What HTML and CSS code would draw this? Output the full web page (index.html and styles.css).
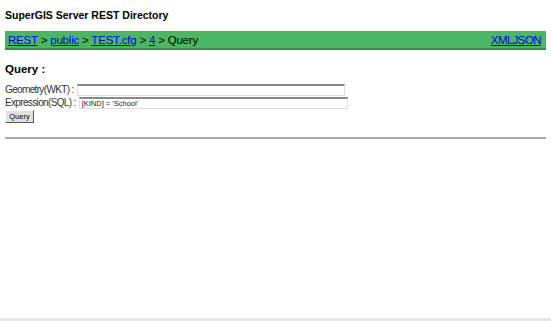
FILE: index.html
```html
<!DOCTYPE html>
<html lang="en">

<head>
    <meta charset="UTF-8">
    <link rel="stylesheet" href="styles.css">
    <title>SuperGIS Server REST Directory</title>
</head>

<body>
    <div class="page">
        <h1 class="title">SuperGIS Server REST Directory</h1>

        <!-- breadcrumb bar -->
        <div class="navbar">
            <div class="crumbs">
                <a href="#">REST</a> &gt; <a href="#">public</a> &gt; <a href="#">TEST.cfg</a> &gt; <a href="#">4</a> &gt; Query
            </div>
            <div class="formats">
                <a href="#">XML</a><a href="#">JSON</a>
            </div>
        </div>

        <h2 class="section">Query :</h2>

        <form class="query-form">
            <div class="row">
                <label for="geometry">Geometry(WKT) :</label>
                <input type="text" id="geometry" class="geo-input">
            </div>
            <div class="row">
                <label for="where">Expression(SQL) :</label>
                <input type="text" id="where" class="sql-input" value="[KIND] = 'School'">
            </div>
            <button type="button" class="btn">Query</button>
        </form>

        <hr class="divider">
    </div>
    <div class="footer"></div>
</body>

</html>
```

FILE: styles.css
```css
html, body {
    margin: 0;
    padding: 0;
}

body {
    font-family: "Liberation Sans", Arial, sans-serif;
    background-color: #fff;
    color: #000;
    height: 100vh;
    display: flex;
    flex-direction: column;
}

.page {
    flex: 1;
    padding: 0 5px;
}

.title {
    font-size: 10.5px;
    font-weight: bold;
    margin: 9px 0 0;
    height: 13px;
    line-height: 13px;
}

.navbar {
    margin-top: 9px;
    background-color: #4cb763;
    border-bottom: 2px solid #3a8a4a;
    height: 17px;
    display: flex;
    align-items: center;
    justify-content: space-between;
    padding: 0 5px 0 3px;
    font-size: 11.5px;
    letter-spacing: -0.2px;
}

.navbar a {
    color: #0000ee;
}

.formats {
    letter-spacing: -0.6px;
}

.section {
    font-size: 11.5px;
    font-weight: bold;
    margin: 12px 0 0;
    height: 14px;
    line-height: 14px;
}

.query-form {
    margin-top: 7px;
    font-size: 10px;
    letter-spacing: -0.65px;
    color: #333;
}

.row {
    display: flex;
    align-items: center;
    height: 13px;
}

.row label {
    margin-right: 3px;
}

.row input {
    height: 12px;
    padding: 0 2px;
    font-family: "Liberation Sans", Arial, sans-serif;
    font-size: 7.5px;
    letter-spacing: 0;
    color: #222;
    border: 1px solid #ddd;
    border-top: 2px solid #888;
    box-sizing: border-box;
}

.geo-input {
    width: 268px;
}

.sql-input {
    width: 269px;
}

.btn {
    margin-top: 1px;
    height: 13px;
    width: 29px;
    padding: 0;
    font-size: 7.5px;
    letter-spacing: 0;
    font-family: "Liberation Sans", Arial, sans-serif;
    background-color: #e4e2dc;
    border: 1px solid;
    border-color: #fff #555 #555 #fff;
}

.divider {
    margin: 14px 0 0;
    border: none;
    border-top: 2px solid #aaa;
    height: 0;
}

.footer {
    height: 3px;
    background-color: #e6e6e3;
}
```
